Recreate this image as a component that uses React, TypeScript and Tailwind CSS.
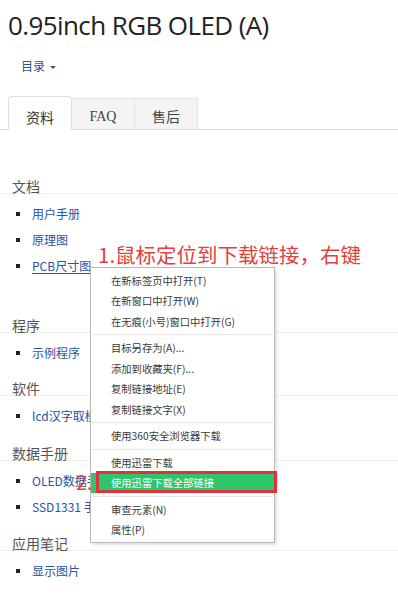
import React from 'react'

type Section = {
  title: string
  items: { label: string; underline?: boolean }[]
  mt: string
}

const sections: Section[] = [
  {
    title: '文档',
    mt: 'mt-[49px]',
    items: [{ label: '用户手册' }, { label: '原理图' }, { label: 'PCB尺寸图', underline: true }],
  },
  { title: '程序', mt: 'mt-[39px]', items: [{ label: '示例程序' }] },
  { title: '软件', mt: 'mt-[15px]', items: [{ label: 'lcd汉字取模软件' }] },
  {
    title: '数据手册',
    mt: 'mt-[17px]',
    items: [{ label: 'OLED数据手册' }, { label: 'SSD1331 手册' }],
  },
  { title: '应用笔记', mt: 'mt-[16px]', items: [{ label: '显示图片' }] },
]

// null = separator
const menuItems: (string | null)[] = [
  '在新标签页中打开(T)',
  '在新窗口中打开(W)',
  '在无痕(小号)窗口中打开(G)',
  null,
  '目标另存为(A)...',
  '添加到收藏夹(F)...',
  '复制链接地址(E)',
  '复制链接文字(X)',
  null,
  '使用360安全浏览器下载',
  null,
  '使用迅雷下载',
  '使用迅雷下载全部链接',
  null,
  '审查元素(N)',
  '属性(P)',
]

const HIGHLIGHT = '使用迅雷下载全部链接'

function ContextMenu() {
  return (
    <div className="absolute left-[90px] top-[267px] w-[185px] bg-white border border-[#b8b8b8] py-[2px] shadow-[2px_2px_3px_rgba(0,0,0,0.12)]">
      {menuItems.map((item, i) =>
        item === null ? (
          <div key={i} className="h-[6px] flex items-center px-[1px]">
            <div className="w-full h-px bg-[#e6e6e6]" />
          </div>
        ) : (
          <div
            key={i}
            className={
              item === HIGHLIGHT
                ? 'h-[20.5px] flex items-center pl-[20px] text-[10.3px] text-white bg-[#2ec66c]'
                : 'h-[20.5px] flex items-center pl-[20px] text-[10.3px] text-[#3a3a3a]'
            }
          >
            {item}
          </div>
        )
      )}
    </div>
  )
}

export default function App() {
  return (
    <div
      className="relative w-[398px] h-[600px] overflow-hidden bg-white"
      style={{ fontFamily: '"Noto Sans CJK SC", "Noto Sans", sans-serif' }}
    >
      {/* Title */}
      <h1
        className="ml-[8px] mt-[10px] text-[26px] leading-[30px] text-[#222] tracking-[-0.6px]"
        style={{ fontFamily: '"Open Sans", sans-serif' }}
      >
        0.95inch RGB OLED (A)
      </h1>

      {/* TOC */}
      <div className="ml-[21px] mt-[18px] h-[16px] flex items-center gap-[5px] text-[12px] text-[#2a52a3]">
        <span>目录</span>
        <span className="w-0 h-0 border-l-[3px] border-r-[3px] border-t-[3px] border-l-transparent border-r-transparent border-t-[#2a52a3] mt-[2px]" />
      </div>

      {/* Tabs */}
      <div className="mt-[22px] pl-[8px] flex items-end h-[34px] border-b border-[#ddd]">
        <div className="w-[64px] h-[34px] -mb-px bg-white border border-b-0 border-[#ddd] rounded-t-[4px] flex items-center justify-center pt-[8px] text-[14px] text-[#333]">
          资料
        </div>
        <div
          className="w-[63px] h-[31px] bg-[#f4f4f4] border-r border-t border-[#e4e4e4] flex items-center justify-center pt-[5px] text-[14px] text-[#444]"
          style={{ fontFamily: '"Liberation Serif", serif' }}
        >
          FAQ
        </div>
        <div className="w-[63px] h-[31px] bg-[#f4f4f4] border-r border-t border-[#e4e4e4] flex items-center justify-center pt-[5px] text-[14px] text-[#444]">
          售后
        </div>
      </div>

      {/* Sections */}
      {sections.map((s) => (
        <div key={s.title} className={s.mt}>
          <div className="pl-[12px] h-[15px] leading-[14px] text-[14px] text-[#555] border-b border-[#f0f0f0]">
            {s.title}
          </div>
          <ul className="mt-[7px]">
            {s.items.map((it) => (
              <li key={it.label} className="h-[26px] flex items-center pl-[16px]">
                <span className="w-[4px] h-[4px] bg-[#222] mr-[12px]" />
                <span
                  className={
                    it.underline
                      ? 'text-[12px] text-[#2a52a3] underline underline-offset-2 whitespace-nowrap'
                      : 'text-[12px] text-[#2a52a3] whitespace-nowrap'
                  }
                >
                  {it.label}
                </span>
              </li>
            ))}
          </ul>
        </div>
      ))}

      {/* Annotation 1 */}
      <div className="absolute left-[98px] top-[242px] text-[20.5px] leading-[24px] text-[#e5403b] whitespace-nowrap">
        1.鼠标定位到下载链接，右键
      </div>

      <ContextMenu />

      {/* highlight box */}
      <div className="absolute left-[96px] top-[471px] w-[181px] h-[22px] border-[3px] border-[#e3313b]" />

      {/* Annotation 2 */}
      <div className="absolute left-[76px] top-[470px] text-[20px] leading-[24px] text-[#e5403b]">
        2.
      </div>
    </div>
  )
}
